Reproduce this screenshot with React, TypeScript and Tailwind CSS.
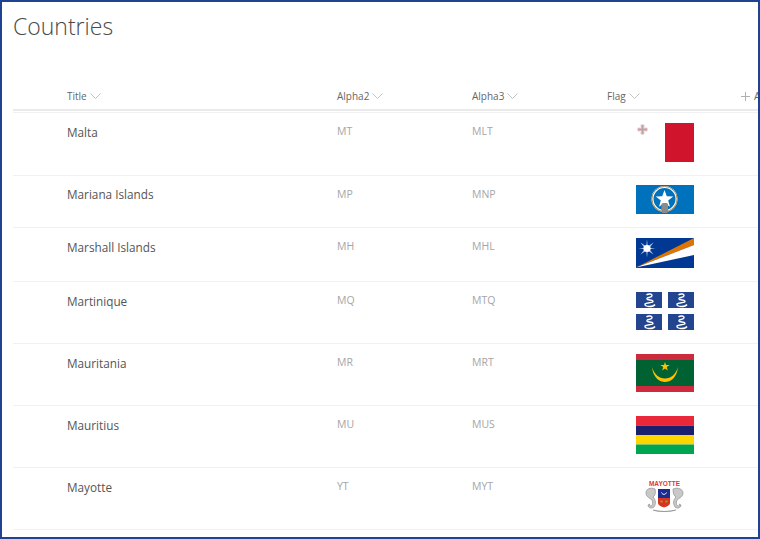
const COUNTRIES = [
  { name: "Malta", a2: "MT", a3: "MLT", nameClass: "pt-[1px]", flag: <Malta /> },
  { name: "Mariana Islands", a2: "MP", a3: "MNP", nameClass: "pt-0", flag: <Mariana /> },
  { name: "Marshall Islands", a2: "MH", a3: "MHL", nameClass: "pt-[1px]", flag: <Marshall /> },
  { name: "Martinique", a2: "MQ", a3: "MTQ", nameClass: "pt-[1px]", flag: <Martinique /> },
  { name: "Mauritania", a2: "MR", a3: "MRT", nameClass: "pt-[1px]", flag: <Mauritania /> },
  { name: "Mauritius", a2: "MU", a3: "MUS", nameClass: "pt-[1px]", flag: <Mauritius /> },
  { name: "Mayotte", a2: "YT", a3: "MYT", nameClass: "pt-[1px]", flag: <Mayotte /> }
];

const HEADERS = ["Title", "Alpha2", "Alpha3", "Flag"];

const COLUMNS = "grid grid-cols-[270px_135px_135px_134px_1fr] pl-[54px]";

export default function App() {
  return (
    <div className="h-[539px] w-[760px] overflow-hidden border-2 border-[#1f4390] bg-white font-['Open_Sans',sans-serif]">
      <h1 className="pt-[7px] pl-[11px] text-[23px] leading-[34px] font-light text-[#4a4a4a]">
        Countries
      </h1>

      <div className="mt-[35px] ml-[11px]">
        {/* Header */}
        <div className={`${COLUMNS} h-[33px] border-b-2 border-[#eaeaea] pt-[10px]`}>
          {HEADERS.map((label) => (
            <div
              key={label}
              className="flex h-[16px] items-center gap-[3px] text-[10px] text-[#666666]">
              {label}
              <Chevron />
            </div>
          ))}
          <div className="flex h-[16px] items-center gap-[4px] text-[10px] whitespace-nowrap text-[#666666]">
            <svg width="9" height="9" viewBox="0 0 9 9" className="shrink-0">
              <path d="M4.5 0v9M0 4.5h9" stroke="#b0b0b0" strokeWidth="1" />
            </svg>
            Add column
          </div>
        </div>

        {/* Rows */}
        <div className="mt-[1px] border-t border-[#f1f1f1]">
          {COUNTRIES.map((c) => (
            <div
              key={c.a2}
              className={`${COLUMNS} border-b border-[#f1f1f1] pt-[10px] pb-[12px]`}>
              <div className={`${c.nameClass} text-[11.75px] leading-[16px] text-[#555555]`}>
                {c.name}
              </div>
              <div className="text-[10.5px] leading-[16px] text-[#a6a6a6]">{c.a2}</div>
              <div className="text-[10.5px] leading-[16px] text-[#a6a6a6]">{c.a3}</div>
              <div className="pb-px pl-[29px]">{c.flag}</div>
            </div>
          ))}
        </div>
      </div>
    </div>
  );
}

function Chevron() {
  return (
    <svg width="11" height="6" viewBox="0 0 11 6" className="shrink-0">
      <path d="M0.5 0.5L5.5 5.5L10.5 0.5" fill="none" stroke="#c4c4c4" strokeWidth="1" />
    </svg>
  );
}

function Malta() {
  return (
    <svg width="58" height="39" viewBox="0 0 58 39" className="block">
      <rect x="29" width="29" height="39" fill="#cf142b" />
      <path
        d="M5 2h3l-.5 3.5L11 5v3l-3.5-.5L8 11H5l.5-3.5L2 8V5l3.5.5z"
        fill="#a9a9a9"
        stroke="#e8b4ba"
        strokeWidth="1"
      />
    </svg>
  );
}

function Mariana() {
  return (
    <svg width="58" height="29" viewBox="0 0 58 29" className="-mt-px block">
      <rect width="58" height="29" fill="#0071bc" />
      <circle cx="28.5" cy="14" r="12" fill="#0071bc" stroke="#ffffff" strokeWidth="2" />
      <circle cx="28.5" cy="14" r="12.6" fill="none" stroke="#a98c5a" strokeWidth="1" />
      <path d="M28.5 5l2.3 6.3 6.4.2-5 4 1.8 6.2-5.5-3.6-5.5 3.6 1.8-6.2-5-4 6.4-.2z" fill="#fff" />
      <rect x="25.5" y="18" width="6.5" height="10" rx="1.5" fill="#8a8a8a" />
    </svg>
  );
}

function Marshall() {
  return (
    <svg width="58" height="30" viewBox="0 0 58 30" className="block">
      <rect width="58" height="30" fill="#003893" />
      <path d="M0 29.5L58 0V7Z" fill="#dd7500" />
      <path d="M0 29.5L58 7V17Z" fill="#fff" />
      <path
        d="M11 1.5L11.8 8.2L17.5 4.5L13.5 10L19.5 10.5L13.5 11.2L17.5 16.5L11.8 12.8L11 19.5L10.2 12.8L4.5 16.5L8.5 11.2L2.5 10.5L8.5 10L4.5 4.5L10.2 8.2Z"
        fill="#dbe4f5"
        opacity="0.8"
      />
      <circle cx="11" cy="10.5" r="3.6" fill="#fff" />
    </svg>
  );
}

function Serpent({ x, y }: { x: number; y: number }) {
  return (
    <g transform={`translate(${x} ${y})`}>
      <rect width="26" height="16" fill="#234590" />
      <path
        d="M10.5 3C12 1.5 16.5 1.5 16 3.8C15.5 6 10.5 5 11 7C11.5 8.5 17 7.5 17 9.5C17 11 10 10.5 9 12C8 15 17 15.5 19 12.5"
        fill="none"
        stroke="#fff"
        strokeWidth="1.4"
      />
    </g>
  );
}

function Martinique() {
  return (
    <svg width="58" height="38" viewBox="0 0 58 38" className="block">
      <Serpent x={0} y={0} />
      <Serpent x={32} y={0} />
      <Serpent x={0} y={22} />
      <Serpent x={32} y={22} />
    </svg>
  );
}

function Mauritania() {
  return (
    <svg width="58" height="38" viewBox="0 0 58 38" className="block">
      <rect width="58" height="38" fill="#cd2a3e" />
      <rect y="6" width="58" height="26" fill="#006233" />
      <path d="M16 13C17 24 24 28 29 28C34 28 41 24 42 13C40 20 35 24.5 29 24.5C23 24.5 18 20 16 13Z" fill="#ffc400" />
      <path d="M29 8l1 3h3.6l-2.9 2 1.1 3.4-2.8-2-2.8 2 1.1-3.4-2.9-2H28z" fill="#ffc400" />
    </svg>
  );
}

function Mauritius() {
  return (
    <svg width="58" height="38" viewBox="0 0 58 38" className="block">
      <rect width="58" height="9.5" fill="#ea2839" />
      <rect y="9.5" width="58" height="9.5" fill="#1a206d" />
      <rect y="19" width="58" height="9.5" fill="#ffd500" />
      <rect y="28.5" width="58" height="9.5" fill="#00a551" />
    </svg>
  );
}

function Mayotte() {
  return (
    <svg width="58" height="38" viewBox="0 0 58 38" className="block">
      <text
        x="28.5"
        y="8"
        textAnchor="middle"
        fontSize="6.5"
        fontWeight="700"
        fill="#e0392b"
        fontFamily="Liberation Sans, sans-serif">
        MAYOTTE
      </text>
      <rect x="22" y="11" width="12" height="9" fill="#1c2b8f" />
      <path d="M25.5 14.5C26.5 17 29.5 17 30.5 14.5" fill="none" stroke="#fff" strokeWidth="1" />
      <path d="M22 20H34V25C34 27 31 28.5 28 29.5C25 28.5 22 27 22 25Z" fill="#d8351f" />
      <circle cx="25.5" cy="23.5" r="1.3" fill="#a08a3a" />
      <circle cx="30.5" cy="23.5" r="1.3" fill="#a08a3a" />
      <g fill="#c8c8c8" stroke="#8f8f8f" strokeWidth="0.7">
        <path d="M19 11C14 9 10 11 10 15C10 19 14 20 16 22C17 25 17 28 14 28C13 28 13 27 14 26L12 27C12 30 16 31 18 29C20 26 20 22 17 19C19 18 20 15 19 11Z" />
        <path d="M37 11C42 9 47 11 47 15C47 19 43 20 41 22C40 25 40 28 43 28C44 28 44 27 43 26L45 27C45 30 41 31 39 29C37 26 37 22 40 19C38 18 37 15 37 11Z" />
      </g>
      <path d="M17 32C23 34 33 34 40 32" fill="none" stroke="#9a9a9a" strokeWidth="1.2" />
    </svg>
  );
}
